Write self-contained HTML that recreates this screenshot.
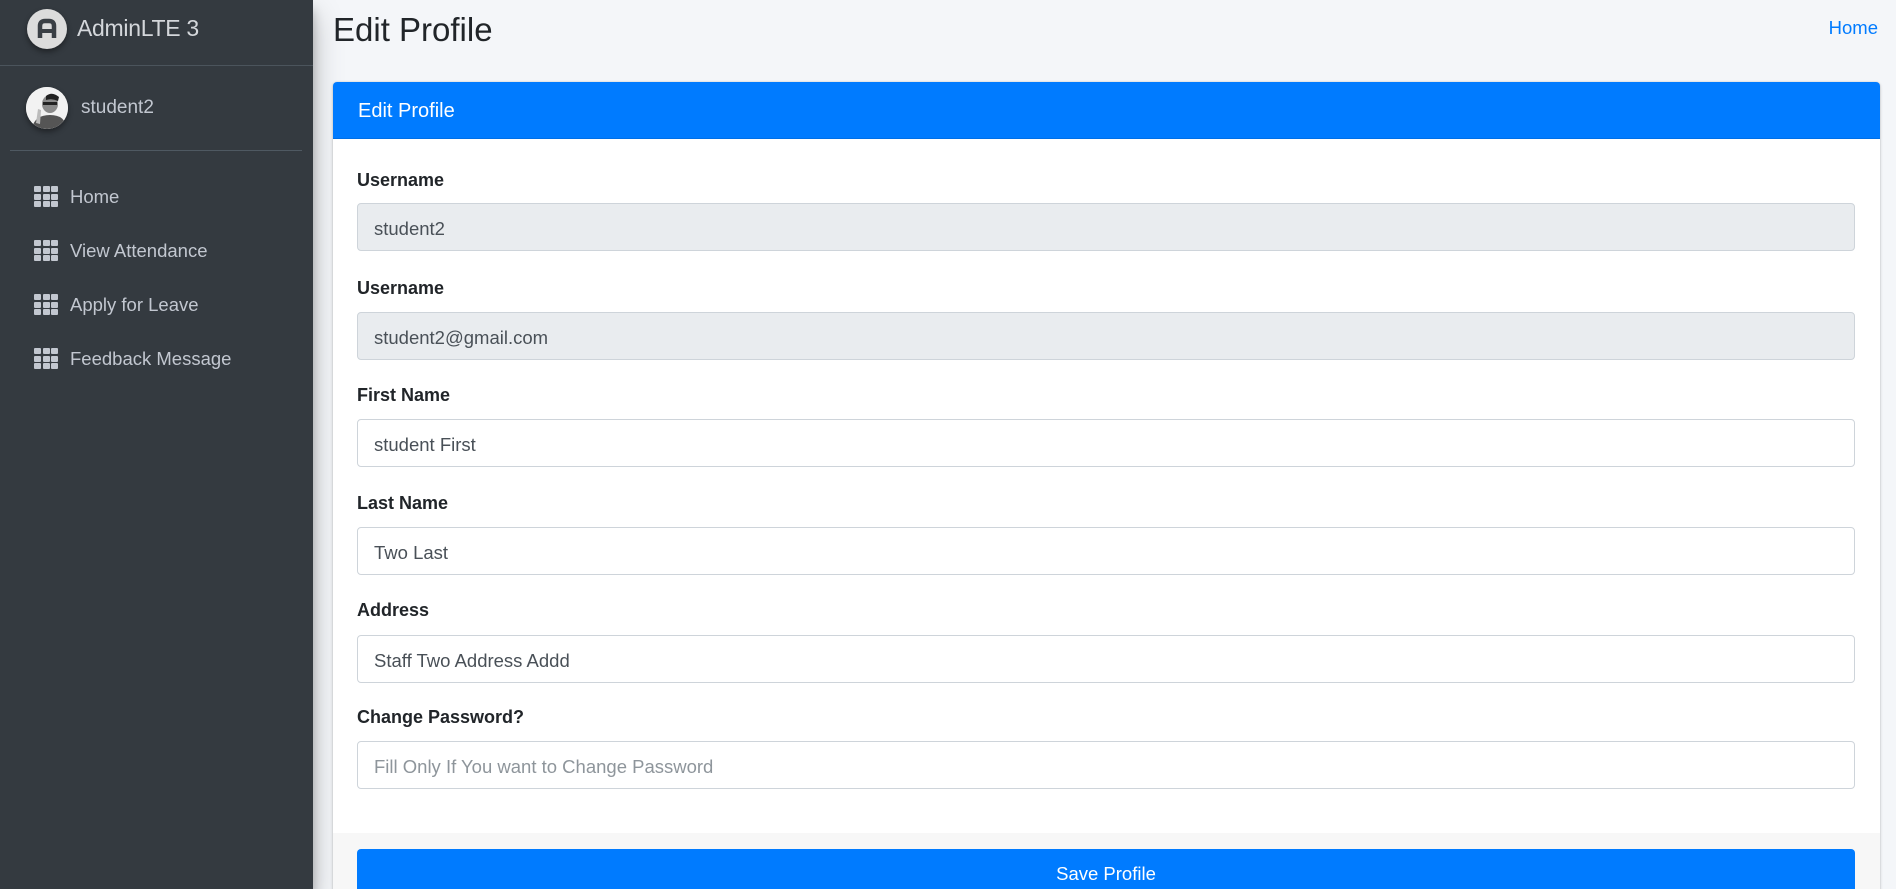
<!DOCTYPE html>
<html><head><meta charset="utf-8"><style>
*{box-sizing:border-box;margin:0;padding:0}
html,body{width:1896px;height:889px;overflow:hidden}
body{font-family:"Liberation Sans",sans-serif;background:#f4f6f9;position:relative}
.sb{position:absolute;left:0;top:0;width:313px;height:889px;background:#343a40;box-shadow:0 14px 28px rgba(0,0,0,.25),0 10px 10px rgba(0,0,0,.22)}
.brand{position:absolute;left:0;top:0;width:313px;height:66px;border-bottom:1px solid #4b545c}
.logo{position:absolute;left:27px;top:9px;width:40px;height:40px;border-radius:50%;background:#dcdcdc;box-shadow:0 3px 6px rgba(0,0,0,.4)}
.brand span{position:absolute;left:77px;top:15px;font-size:23px;color:#d4d7db;font-weight:300;letter-spacing:-0.3px}
.user{position:absolute;left:26px;top:87px}
.av{position:absolute;left:0;top:0;width:42px;height:42px;border-radius:50%;background:#fff;overflow:hidden;box-shadow:0 3px 6px rgba(0,0,0,.4)}
.uname{position:absolute;left:81px;top:97px;font-size:19px;color:#c2c7d0}
.line{position:absolute;left:10px;top:150px;width:292px;height:1px;background:#4f5962}
.nav{position:absolute;left:0;font-size:18.5px;color:#c2c7d0;width:313px}
.nav .ic{position:absolute;left:34px;top:-10px;width:24px;height:21px;display:grid;grid-template-columns:repeat(3,1fr);grid-template-rows:repeat(3,1fr);gap:1.5px}
.nav .ic i{background:#c2c7d0;border-radius:1px}
.nav span{position:absolute;left:70px;top:-10px;white-space:nowrap}
h1{position:absolute;left:333px;top:11px;font-size:33px;font-weight:400;color:#212529}
.home{position:absolute;right:18px;top:17px;font-size:18.5px;color:#007bff}
.card{position:absolute;left:333px;top:82px;width:1547px;height:820px;background:#fff;border-radius:4px;box-shadow:0 0 1px rgba(0,0,0,.2),0 1px 3px rgba(0,0,0,.2)}
.ch{height:57px;background:#007bff;border-radius:4px 4px 0 0;color:#fff;font-size:20px;padding:18px 0 0 25px;border-bottom:1px solid #006fe6}
.lbl{position:absolute;left:24px;font-size:18px;font-weight:bold;color:#212529;margin-top:2px}
.inp{position:absolute;left:24px;width:1498px;height:48px;border:1px solid #ced4da;border-radius:4px;font-size:18.5px;color:#495057;padding:14px 0 0 16px;background:#fff}
.inp.d{background:#e9ecef}
.inp.ph{color:#8e959b}
.ft{position:absolute;left:0;top:751px;width:1547px;height:70px;background:#f7f7f7}
.btn{position:absolute;left:24px;top:16px;width:1498px;height:60px;background:#007bff;border-radius:4px;color:#fff;font-size:18.5px;text-align:center;padding-top:14px}
</style></head><body>
<div class="sb">
 <div class="brand">
  <div class="logo"><svg width="40" height="40" viewBox="0 0 40 40"><path d="M13 29V17q0-5 5-5h4q5 0 5 5v12" fill="none" stroke="#3a3f45" stroke-width="4.5"/><path d="M13 22h14" stroke="#3a3f45" stroke-width="4"/></svg></div>
  <span>AdminLTE 3</span>
 </div>
 <div class="user"><div class="av"><svg width="42" height="42" viewBox="0 0 42 42"><rect width="42" height="42" fill="#f2f2f2"/><ellipse cx="24" cy="17" rx="8" ry="9" fill="#8a8a8a"/><path d="M20 9q6-5 13 1l-1 4q-6-3-12-1z" fill="#222"/><rect x="17" y="15" width="14" height="3" fill="#222"/><path d="M6 42q2-14 18-14t16 14z" fill="#555"/><path d="M10 36l2-14 3 1-1 14z" fill="#bbb"/></svg></div></div>
 <div class="uname">student2</div>
 <div class="line"></div>
 <div class="nav" style="top:196px"><div class="ic"><i></i><i></i><i></i><i></i><i></i><i></i><i></i><i></i><i></i></div><span>Home</span></div>
 <div class="nav" style="top:250px"><div class="ic"><i></i><i></i><i></i><i></i><i></i><i></i><i></i><i></i><i></i></div><span>View Attendance</span></div>
 <div class="nav" style="top:304px"><div class="ic"><i></i><i></i><i></i><i></i><i></i><i></i><i></i><i></i><i></i></div><span>Apply for Leave</span></div>
 <div class="nav" style="top:358px"><div class="ic"><i></i><i></i><i></i><i></i><i></i><i></i><i></i><i></i><i></i></div><span>Feedback Message</span></div>
</div>
<h1>Edit Profile</h1>
<div class="home">Home</div>
<div class="card">
 <div class="ch">Edit Profile</div>
 <div class="lbl" style="top:86px">Username</div>
 <div class="inp d" style="top:121px">student2</div>
 <div class="lbl" style="top:194px">Username</div>
 <div class="inp d" style="top:230px">student2@gmail.com</div>
 <div class="lbl" style="top:301px">First Name</div>
 <div class="inp" style="top:337px">student First</div>
 <div class="lbl" style="top:409px">Last Name</div>
 <div class="inp" style="top:445px">Two Last</div>
 <div class="lbl" style="top:516px">Address</div>
 <div class="inp" style="top:553px">Staff Two Address Addd</div>
 <div class="lbl" style="top:623px">Change Password?</div>
 <div class="inp ph" style="top:659px">Fill Only If You want to Change Password</div>
 <div class="ft"><div class="btn">Save Profile</div></div>
</div>
</body></html>
